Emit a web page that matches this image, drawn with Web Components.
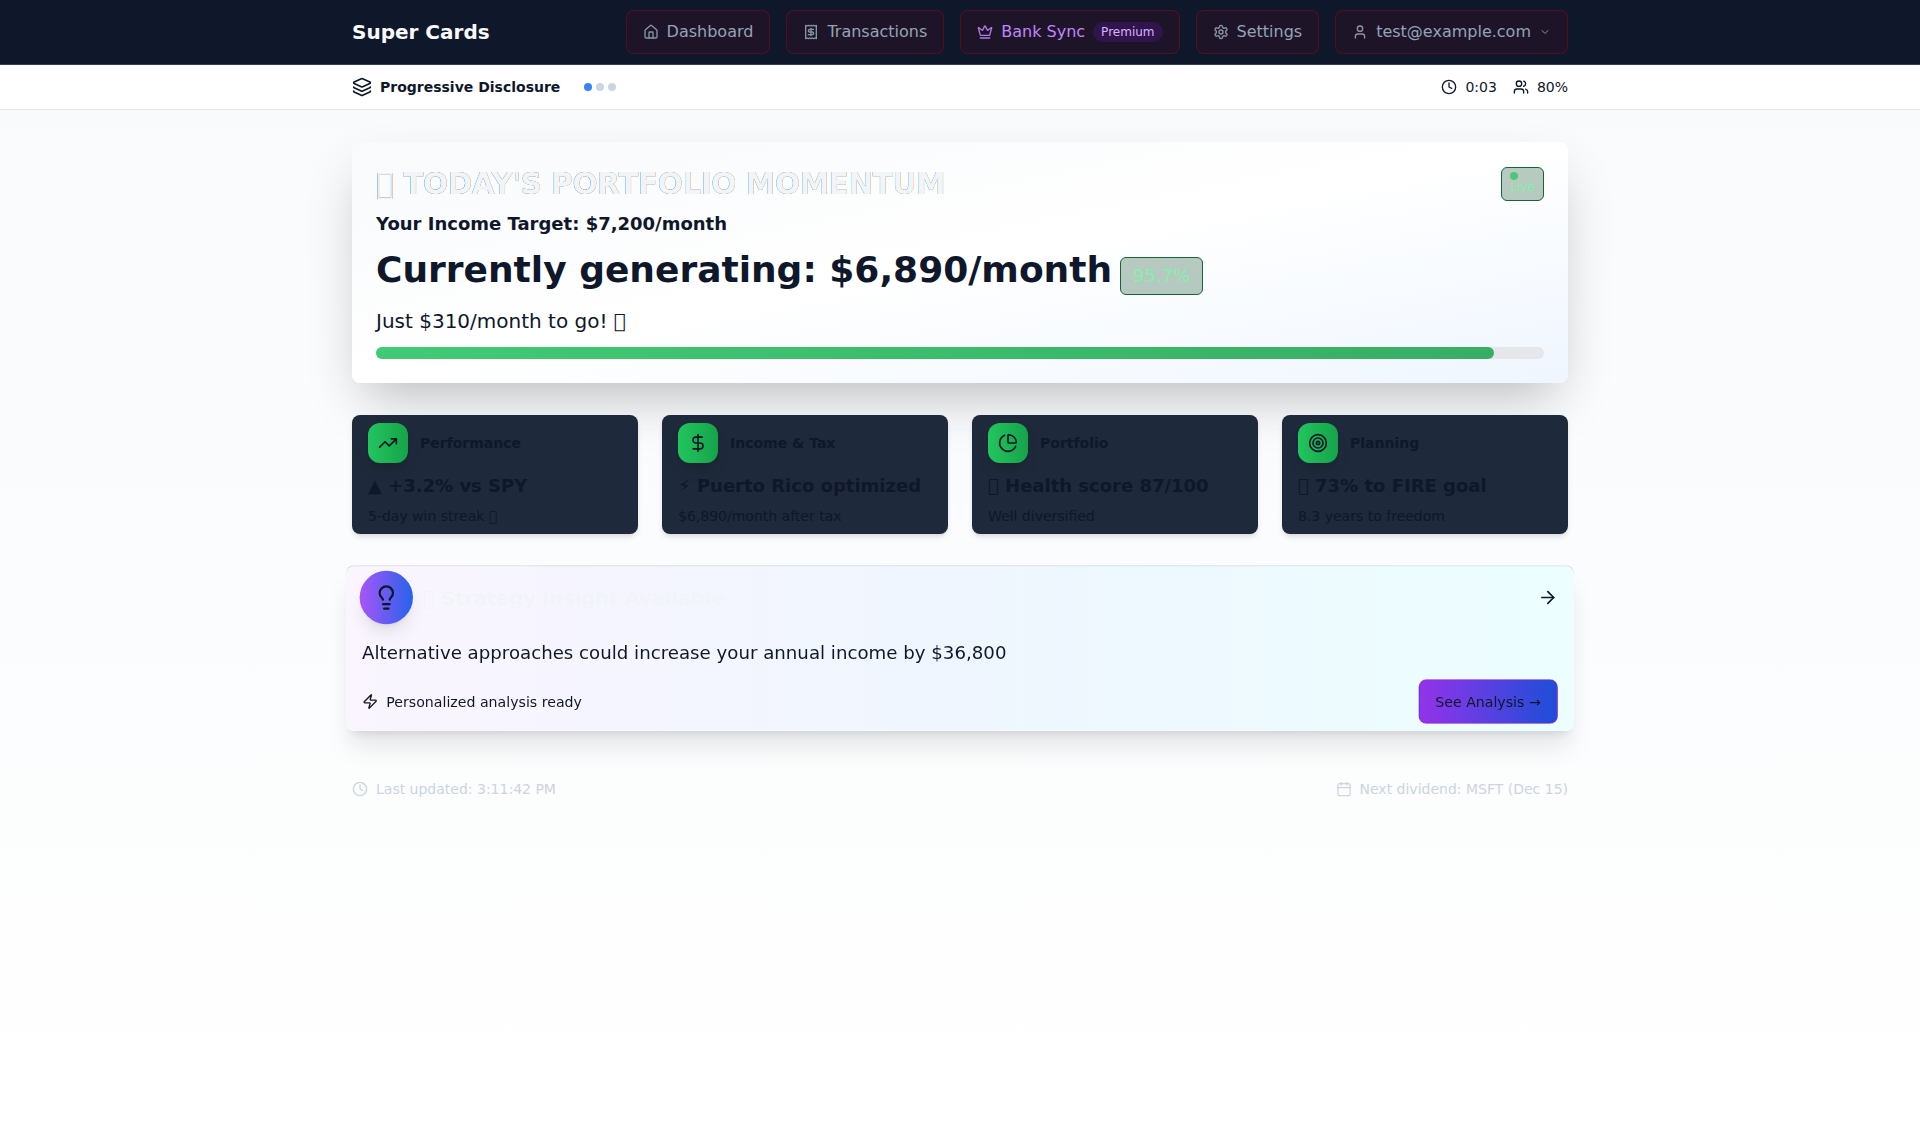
<!DOCTYPE html>
<html lang="en">
<head>
<meta charset="utf-8">
<title>Super Cards</title>
<style>
html,body{margin:0;padding:0}
body{font-family:"DejaVu Sans",sans-serif;font-size:16px;line-height:24px;color:#0f172a;background:#fff}
</style>
</head>
<body>
<sc-app></sc-app>
<script>
const ICONS={
home:'<path d="M15 21v-8a1 1 0 0 0-1-1h-4a1 1 0 0 0-1 1v8"/><path d="M3 10a2 2 0 0 1 .709-1.528l7-5.999a2 2 0 0 1 2.582 0l7 5.999A2 2 0 0 1 21 10v9a2 2 0 0 1-2 2H5a2 2 0 0 1-2-2z"/>',
receipt:'<path d="M4 2v20l2-1 2 1 2-1 2 1 2-1 2 1 2-1 2 1V2l-2 1-2-1-2 1-2-1-2 1-2-1-2 1Z"/><path d="M16 8h-6a2 2 0 1 0 0 4h4a2 2 0 1 1 0 4H8"/><path d="M12 17.5v-11"/>',
crown:'<path d="M11.562 3.266a.5.5 0 0 1 .876 0L15.39 8.87a1 1 0 0 0 1.516.294L21.183 5.5a.5.5 0 0 1 .798.519l-2.834 10.246a1 1 0 0 1-.956.734H5.81a1 1 0 0 1-.957-.734L2.02 6.02a.5.5 0 0 1 .798-.519l4.276 3.664a1 1 0 0 0 1.516-.294z"/><path d="M5 21h14"/>',
settings:'<path d="M12.22 2h-.44a2 2 0 0 0-2 2v.18a2 2 0 0 1-1 1.73l-.43.25a2 2 0 0 1-2 0l-.15-.08a2 2 0 0 0-2.73.73l-.22.38a2 2 0 0 0 .73 2.73l.15.1a2 2 0 0 1 1 1.72v.51a2 2 0 0 1-1 1.74l-.15.09a2 2 0 0 0-.73 2.73l.22.38a2 2 0 0 0 2.73.73l.15-.08a2 2 0 0 1 2 0l.43.25a2 2 0 0 1 1 1.73V20a2 2 0 0 0 2 2h.44a2 2 0 0 0 2-2v-.18a2 2 0 0 1 1-1.73l.43-.25a2 2 0 0 1 2 0l.15.08a2 2 0 0 0 2.73-.73l.22-.39a2 2 0 0 0-.73-2.73l-.15-.08a2 2 0 0 1-1-1.74v-.5a2 2 0 0 1 1-1.74l.15-.09a2 2 0 0 0 .73-2.73l-.22-.38a2 2 0 0 0-2.73-.73l-.15.08a2 2 0 0 1-2 0l-.43-.25a2 2 0 0 1-1-1.73V4a2 2 0 0 0-2-2z"/><circle cx="12" cy="12" r="3"/>',
user:'<path d="M19 21v-2a4 4 0 0 0-4-4H9a4 4 0 0 0-4 4v2"/><circle cx="12" cy="7" r="4"/>',
chevron:'<path d="m6 9 6 6 6-6"/>',
layers:'<path d="M12.83 2.18a2 2 0 0 0-1.66 0L2.6 6.08a1 1 0 0 0 0 1.83l8.58 3.91a2 2 0 0 0 1.66 0l8.58-3.9a1 1 0 0 0 0-1.83Z"/><path d="M2 12a1 1 0 0 0 .58.91l8.6 3.91a2 2 0 0 0 1.65 0l8.58-3.9A1 1 0 0 0 22 12"/><path d="M2 17a1 1 0 0 0 .58.91l8.6 3.91a2 2 0 0 0 1.65 0l8.58-3.9A1 1 0 0 0 22 17"/>',
clock:'<circle cx="12" cy="12" r="10"/><path d="M12 6v6l4 2"/>',
users:'<path d="M16 21v-2a4 4 0 0 0-4-4H6a4 4 0 0 0-4 4v2"/><circle cx="9" cy="7" r="4"/><path d="M22 21v-2a4 4 0 0 0-3-3.87"/><path d="M16 3.13a4 4 0 0 1 0 7.75"/>',
trend:'<path d="M22 7 13.5 15.5 8.5 10.5 2 17"/><path d="M16 7h6v6"/>',
dollar:'<path d="M12 2v20"/><path d="M17 5H9.5a3.5 3.5 0 0 0 0 7h5a3.5 3.5 0 0 1 0 7H6"/>',
pie:'<path d="M21 12c.552 0 1.005-.449.95-.998a10 10 0 0 0-8.953-8.951c-.55-.055-.998.398-.998.95v8a1 1 0 0 0 1 1z"/><path d="M21.21 15.89A10 10 0 1 1 8 2.83"/>',
target:'<circle cx="12" cy="12" r="10"/><circle cx="12" cy="12" r="6"/><circle cx="12" cy="12" r="2"/>',
bulb:'<path d="M15 14c.2-1 .7-1.7 1.5-2.5 1-.9 1.5-2.2 1.5-3.5A6 6 0 0 0 6 8c0 1 .2 2.2 1.5 3.5.7.7 1.3 1.5 1.5 2.5"/><path d="M9 18h6"/><path d="M10 22h4"/>',
arrow:'<path d="M5 12h14"/><path d="m12 5 7 7-7 7"/>',
zap:'<path d="M4 14a1 1 0 0 1-.78-1.63l9.9-10.2a.5.5 0 0 1 .86.46l-1.92 6.02A1 1 0 0 0 13 10h7a1 1 0 0 1 .78 1.63l-9.9 10.2a.5.5 0 0 1-.86-.46l1.92-6.02A1 1 0 0 0 11 14z"/>',
calendar:'<path d="M8 2v4"/><path d="M16 2v4"/><rect width="18" height="18" x="3" y="4" rx="2"/><path d="M3 10h18"/>'
};
function define(name,html){
  customElements.define(name,class extends HTMLElement{
    constructor(){super();this.attachShadow({mode:'open'}).innerHTML=typeof html==='function'?'':html;}
    connectedCallback(){if(typeof html==='function')this.shadowRoot.innerHTML=html(this);}
  });
}
define('sc-icon',el=>{
  const s=el.getAttribute('size')||16;
  return `<style>:host{display:block;flex:none;width:${s}px;height:${s}px}svg{display:block}</style><svg width="${s}" height="${s}" viewBox="0 0 24 24" fill="none" stroke="currentColor" stroke-width="2" stroke-linecap="round" stroke-linejoin="round">${ICONS[el.getAttribute('name')]}</svg>`;
});
define('sc-nav-item',`<style>
:host{display:flex;align-items:center;gap:8px;box-sizing:border-box;height:44px;padding:0 16px;border:1px solid rgba(153,10,27,.42);border-radius:8px;background:rgba(127,10,20,.13);color:#94a3b8;white-space:nowrap}
:host([premium]){color:#c084fc}
::slotted(sc-icon){opacity:.9}
</style><slot></slot>`);
define('sc-pill',`<style>:host{display:block;font-size:12px;line-height:16px;padding:2px 8px;border-radius:99px;background:rgba(74,22,125,.43);color:#d8b4fe}</style><slot></slot>`);
define('sc-header',`<style>
:host{display:block;background:#0f172a;border-bottom:1px solid #334155}
.in{width:1216px;height:64px;margin:0 auto;display:flex;align-items:center;justify-content:space-between}
b{font-size:20px;line-height:28px;color:#f8fafc}
nav{display:flex;gap:16px}
</style><div class="in"><b>Super Cards</b><nav>
<sc-nav-item><sc-icon name="home"></sc-icon><span>Dashboard</span></sc-nav-item>
<sc-nav-item><sc-icon name="receipt"></sc-icon><span>Transactions</span></sc-nav-item>
<sc-nav-item premium><sc-icon name="crown"></sc-icon><span>Bank Sync</span><sc-pill>Premium</sc-pill></sc-nav-item>
<sc-nav-item><sc-icon name="settings"></sc-icon><span>Settings</span></sc-nav-item>
<sc-nav-item><sc-icon name="user"></sc-icon><span>test@example.com</span><sc-icon name="chevron" size="12"></sc-icon></sc-nav-item>
</nav></div>`);
define('sc-subbar',`<style>
:host{display:block;background:#fff;border-bottom:1px solid #e2e8f0;font-size:14px;line-height:20px}
.in{width:1216px;height:44px;margin:0 auto;display:flex;align-items:center;justify-content:space-between}
.l,.r,.g,.dots{display:flex;align-items:center}
.g{gap:8px}.l{gap:24px}.r{gap:16px}.dots{gap:4px}
i{width:8px;height:8px;border-radius:50%;background:#cbd5e1}
i.on{background:#3b82f6}
</style><div class="in"><div class="l"><div class="g"><sc-icon name="layers" size="20"></sc-icon><b>Progressive Disclosure</b></div><div class="dots"><i class="on"></i><i></i><i></i></div></div>
<div class="r"><div class="g"><sc-icon name="clock"></sc-icon><span>0:03</span></div><div class="g"><sc-icon name="users"></sc-icon><span>80%</span></div></div></div>`);
define('sc-hero',`<style>
:host{display:block;box-sizing:border-box;height:241px;padding:24px;border-radius:8px;background:linear-gradient(to bottom right,#f8fafc,#fff,#eff6ff);box-shadow:0 25px 50px -12px rgba(0,0,0,.25)}
.top{display:flex;justify-content:space-between;align-items:flex-start;height:36px}
h1{margin:0;font-size:30px;line-height:36px;letter-spacing:-.75px;color:#f1f5f9;background:linear-gradient(to right,#0f172a,#334155);-webkit-background-clip:text;background-clip:text}
.badge{box-sizing:border-box;border:1px solid #166534;border-radius:6px;background:rgba(20,83,45,.3);color:#86efac}
.live{display:flex;flex-direction:column;margin-top:1px;height:34px;padding:4px 8px 0;font-size:12px}
.live i{width:8px;height:8px;border-radius:50%;background:#22c55e;opacity:.7}
.live span{line-height:16px;margin-top:-1px}
.target{margin-top:8px;font-size:18px;line-height:28px;font-weight:700}
.row{display:flex;align-items:baseline;gap:8px;height:45px;margin-top:12px}
.row b{font-size:36px;line-height:40px}
.pct{font-size:18px;line-height:28px;padding:4px 12px}
.go{margin-top:12px;font-size:20px;line-height:28px}
.bar{margin-top:12px;height:12px;border-radius:6px;background:#e5e7eb}
.fill{width:95.7%;height:12px;border-radius:6px;background:linear-gradient(to right,#22c55e,#16a34a);opacity:.84}
</style><div class="top"><h1>&#x10FFF0; TODAY'S PORTFOLIO MOMENTUM</h1><div class="badge live"><i></i><span>Live</span></div></div>
<div class="target">Your Income Target: $7,200/month</div>
<div class="row"><b>Currently generating: $6,890/month</b><span class="badge pct">95.7%</span></div>
<div class="go">Just $310/month to go! &#x10FFF0;</div><div class="bar"><div class="fill"></div></div>`);
define('sc-card',`<style>
:host{display:block;box-sizing:border-box;height:119px;padding:8px 16px;border-radius:8px;background:#1e293b;box-shadow:0 4px 6px -1px rgba(0,0,0,.1),0 2px 4px -2px rgba(0,0,0,.1)}
.h{display:flex;align-items:center;gap:12px;font-size:14px;line-height:20px;font-weight:700}
.ic{display:flex;align-items:center;justify-content:center;width:40px;height:40px;border-radius:12px;background:linear-gradient(to right,#22c55e,#16a34a);box-shadow:0 10px 15px -3px rgba(0,0,0,.1),0 4px 6px -4px rgba(0,0,0,.1)}
.v{margin-top:9px;font-size:18px;line-height:28px;font-weight:700;white-space:nowrap}
.s{margin-top:6px;font-size:14px;line-height:20px}
</style><div class="h"><div class="ic"><slot name="icon"></slot></div><slot name="label"></slot></div><div class="v"><slot name="value"></slot></div><div class="s"><slot></slot></div>`);
define('sc-insight',`<style>
:host{display:block;box-sizing:border-box;height:164px;padding:8px 16px 0;border-radius:8px;background:linear-gradient(to right,#faf5ff,#eff6ff,#ecfeff);box-shadow:inset 0 1px 0 rgba(0,0,0,.12),0 20px 25px -5px rgba(0,0,0,.1),0 8px 10px -6px rgba(0,0,0,.1);transform:scale(1.01)}
.h,.g,.f{display:flex;align-items:center}
.h,.f{justify-content:space-between}
.g{gap:12px}
.ic{display:flex;align-items:center;justify-content:center;width:48px;height:48px;border-radius:50%;background:linear-gradient(to right,#a855f7,#2563eb);box-shadow:0 10px 15px -3px rgba(0,0,0,.1),0 4px 6px -4px rgba(0,0,0,.1);transform:scale(1.1)}
h2{margin:0;font-size:20px;line-height:28px;letter-spacing:-.5px;color:#f1f5f9}
p{margin:16px 0 12px;font-size:18px;line-height:29.25px}
.f{font-size:14px;line-height:20px}.f .g{gap:8px}
button{box-sizing:border-box;height:44px;margin:0;padding:0 16px;border:1px solid rgba(190,40,180,.45);border-radius:8px;background:linear-gradient(to right,#9333ea,#1d4ed8);color:#0f172a;font:14px/20px "DejaVu Sans",sans-serif}
</style><div class="h"><div class="g"><div class="ic"><sc-icon name="bulb" size="24"></sc-icon></div><h2>&#x10FFF0; Strategy Insight Available</h2></div><sc-icon name="arrow" size="20"></sc-icon></div>
<p>Alternative approaches could increase your annual income by $36,800</p>
<div class="f"><div class="g"><sc-icon name="zap"></sc-icon><span>Personalized analysis ready</span></div><button>See Analysis →</button></div>`);
define('sc-footer',`<style>
:host{display:flex;justify-content:space-between;font-size:14px;line-height:20px;color:#cbd5e1}
div{display:flex;align-items:center;gap:8px}
</style><div><sc-icon name="clock"></sc-icon><span>Last updated: 3:11:42 PM</span></div><div><sc-icon name="calendar"></sc-icon><span>Next dividend: MSFT (Dec 15)</span></div>`);
define('sc-app',`<style>
:host{display:flex;flex-direction:column;height:1145px}
main{flex:1;background:linear-gradient(to bottom,#f8fafc,#fff)}
.in{width:1216px;margin:0 auto;padding-top:32px;display:flex;flex-direction:column;gap:32px}
.cards{display:grid;grid-template-columns:repeat(4,1fr);gap:24px}
sc-footer{margin-top:17px}
</style><sc-header></sc-header><sc-subbar></sc-subbar><main><div class="in"><sc-hero></sc-hero><div class="cards">
<sc-card><sc-icon slot="icon" name="trend" size="20"></sc-icon><span slot="label">Performance</span><span slot="value">▲ +3.2% vs SPY</span>5-day win streak &#x10FFF0;</sc-card>
<sc-card><sc-icon slot="icon" name="dollar" size="20"></sc-icon><span slot="label">Income &amp; Tax</span><span slot="value">⚡ Puerto Rico optimized</span>$6,890/month after tax</sc-card>
<sc-card><sc-icon slot="icon" name="pie" size="20"></sc-icon><span slot="label">Portfolio</span><span slot="value">&#x10FFF0; Health score 87/100</span>Well diversified</sc-card>
<sc-card><sc-icon slot="icon" name="target" size="20"></sc-icon><span slot="label">Planning</span><span slot="value">&#x10FFF0; 73% to FIRE goal</span>8.3 years to freedom</sc-card>
</div><sc-insight></sc-insight><sc-footer></sc-footer></div></main>`);
</script>
</body>
</html>
